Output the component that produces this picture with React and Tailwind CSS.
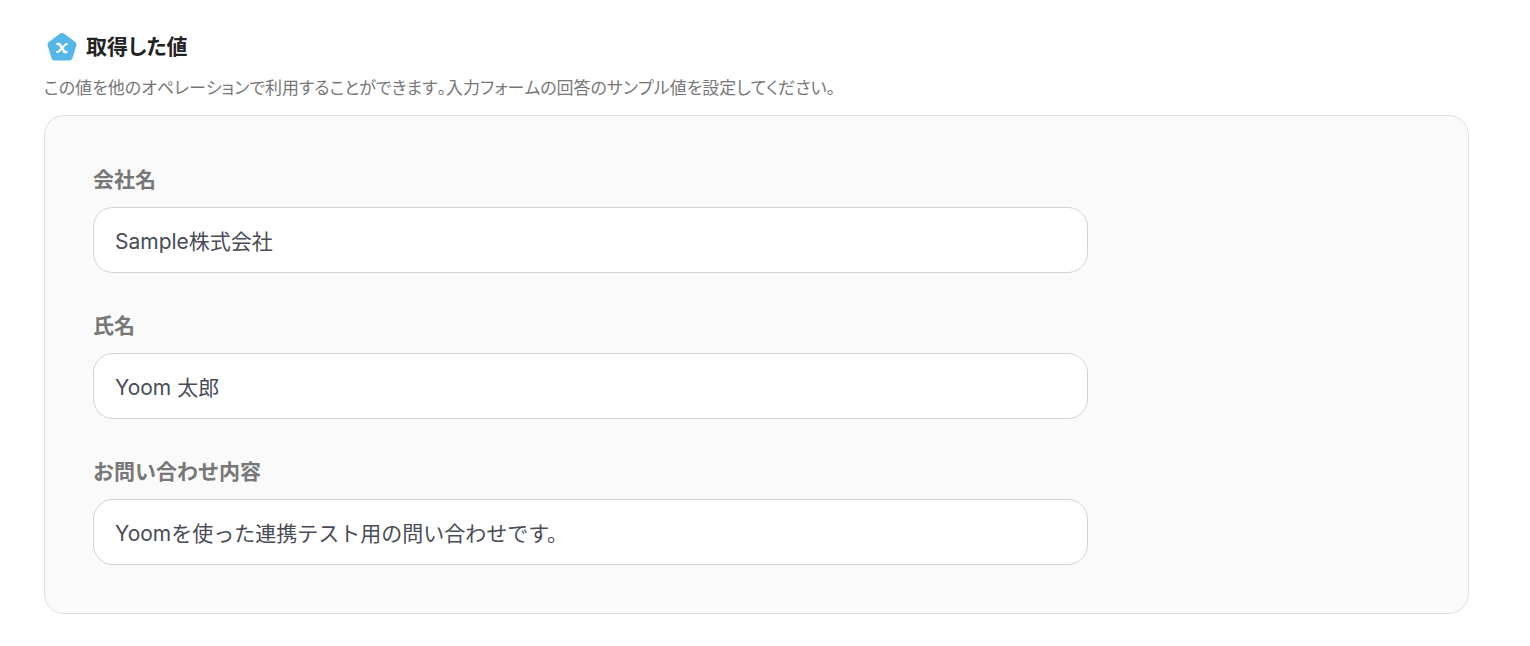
import { useState } from 'react';

const FIELDS = [
  { id: 'company', label: '会社名', value: 'Sample株式会社' },
  { id: 'name', label: '氏名', value: 'Yoom 太郎' },
  { id: 'inquiry', label: 'お問い合わせ内容', value: 'Yoomを使った連携テスト用の問い合わせです。' },
];

function ValueIcon() {
  return (
    <svg width="32" height="32" viewBox="0 0 32 32" aria-hidden="true">
      <path
        d="M16 5 L27.500 13.500 L23.500 26.500 H8.500 L4.500 13.500 Z"
        fill="#55b7e8"
        stroke="#55b7e8"
        strokeWidth="6"
        strokeLinejoin="round"
      />
      <path
        d="M11.500 13 H13.500 L18.500 21 H20.500"
        fill="none"
        stroke="#fff"
        strokeWidth="2.4"
        strokeLinecap="round"
        strokeLinejoin="round"
      />
      <path d="M21 13 C18.500 12.500 14 21.500 11 21" fill="none" stroke="#fff" strokeWidth="2" strokeLinecap="round" />
    </svg>
  );
}

export default function App() {
  const [values, setValues] = useState(() => Object.fromEntries(FIELDS.map((f) => [f.id, f.value])));

  return (
    <main className="min-h-screen bg-white pt-[31px] pr-[61px] pb-8 pl-11 font-['Inter','Noto_Sans_CJK_JP',sans-serif]">
      {/* Header */}
      <div className="flex items-center gap-2 pl-0.5">
        <ValueIcon />
        <h1 className="text-[21px] leading-7 font-bold text-[#222] [font-feature-settings:'palt','kern'_0] [font-kerning:none]">取得した値</h1>
      </div>
      <p className="mt-3 text-[17px] leading-[26px] text-[#777] [font-feature-settings:'palt','kern'_0] [font-kerning:none]">
        この値を他のオペレーションで利用することができます。入力フォームの回答のサンプル値を設定してください。
      </p>

      {/* Sample values */}
      <form className="mt-3.5 flex flex-col gap-[37px] rounded-[20px] border border-[#e0e0e4] bg-[#fafafa] p-12" onSubmit={(e) => e.preventDefault()}>
        {FIELDS.map((field) => (
          <div key={field.id} className="flex w-[75%] flex-col gap-3">
            <label htmlFor={field.id} className="text-[21px] leading-[31px] font-bold text-[#777]">
              {field.label}
            </label>
            <input
              id={field.id}
              type="text"
              value={values[field.id]}
              onChange={(e) => setValues({ ...values, [field.id]: e.target.value })}
              className="h-[66px] w-full rounded-[20px] border border-[#d0d3da] bg-white px-[21px] text-[21px] text-[#484c56] outline-none focus:border-sky-400"
            />
          </div>
        ))}
      </form>
    </main>
  );
}
